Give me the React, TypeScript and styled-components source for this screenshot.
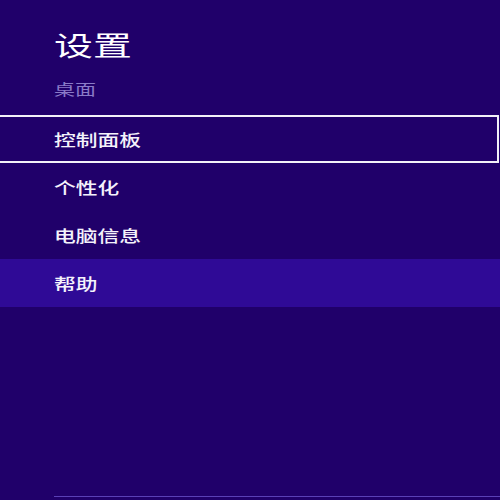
import React from "react";
import styled, { createGlobalStyle } from "styled-components";

const GlobalStyle = createGlobalStyle`
  html, body {
    margin: 0;
    padding: 0;
    background: #20006a;
  }
  * {
    box-sizing: border-box;
  }
`;

const Panel = styled.div`
  width: 500px;
  height: 500px;
  background: #20006a;
  color: #ffffff;
  font-family: "Noto Sans CJK SC", "Noto Sans", sans-serif;
  display: flex;
  flex-direction: column;
  overflow: hidden;
`;

const Header = styled.div`
  padding: 25px 0 0 54px;
  height: 115px;
  display: flex;
  flex-direction: column;
`;

// the screenshot is stretched sideways, so glyphs get widened
const Wide = styled.span<{ $scale?: number }>`
  display: inline-block;
  transform: scaleX(${(p) => p.$scale ?? 1.38});
  transform-origin: left center;
  white-space: nowrap;
`;

const Title = styled.div`
  font-size: 27px;
  line-height: 40px;
  height: 40px;
  font-weight: 400;
  color: #ffffff;
`;

const Subtitle = styled.div`
  margin-top: 14px;
  font-size: 15px;
  line-height: 20px;
  height: 20px;
  color: #8a7bc8;
`;

const Menu = styled.div`
  display: flex;
  flex-direction: column;
`;

const Item = styled.div<{ $focused?: boolean; $hover?: boolean }>`
  height: 48px;
  display: flex;
  align-items: center;
  padding-left: 54px;
  font-size: 16px;
  font-weight: 500;
  color: #f4f2fb;
  background: ${(p) => (p.$hover ? "#2f0a96" : "transparent")};
  margin-right: ${(p) => (p.$focused ? "1px" : "0")};
  border: ${(p) => (p.$focused ? "2px solid #f2f0f8" : "none")};
  border-left: none;
  padding-left: ${(p) => (p.$focused ? "54px" : "54px")};
`;

const Spacer = styled.div`
  flex: 1;
`;

const Footer = styled.div`
  margin-left: 54px;
  height: 4px;
  border-top: 1px solid #5a40b6;
`;

const items = [
  { label: "控制面板", focused: true },
  { label: "个性化" },
  { label: "电脑信息" },
  { label: "帮助", hover: true },
];

export default function App() {
  return (
    <Panel>
      <GlobalStyle />
      <Header>
        <Title>
          <Wide $scale={1.44}>设置</Wide>
        </Title>
        <Subtitle>
          <Wide $scale={1.4}>桌面</Wide>
        </Subtitle>
      </Header>
      <Menu>
        {items.map((it) => (
          <Item key={it.label} $focused={it.focused} $hover={it.hover}>
            <Wide $scale={1.36}>{it.label}</Wide>
          </Item>
        ))}
      </Menu>
      <Spacer />
      <Footer />
    </Panel>
  );
}
